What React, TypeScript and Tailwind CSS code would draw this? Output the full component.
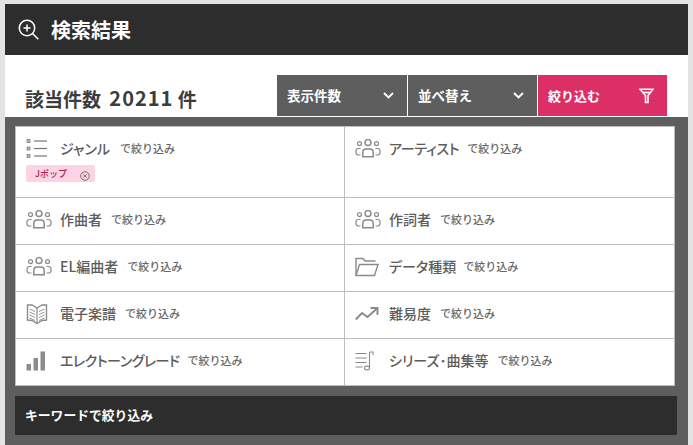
const font = "font-['Noto_Sans_CJK_JP','Noto_Sans',sans-serif]";

function People() {
  return (
    <svg width="26" height="19" viewBox="0 0 26 19" fill="none" stroke="#8a8a8a" strokeWidth="1.2">
      <circle cx="13" cy="3.6" r="3" strokeWidth="1.5" />
      <circle cx="4.5" cy="4.6" r="2" />
      <circle cx="21.5" cy="4.6" r="2" />
      <path d="M7.8 17.8V13.5Q7.8 10 11 10H15Q18.2 10 18.2 13.5V17.8Z" strokeWidth="1.5" />
      <path d="M5.5 9.5H3.5Q1 9.5 1 12V13.5Q1 16 3.5 16H5.5" />
      <path d="M20.5 9.5H22.5Q25 9.5 25 12V13.5Q25 16 22.5 16H20.5" />
    </svg>
  );
}

function ListIcon() {
  return (
    <svg width="22" height="20" viewBox="0 0 22 20" fill="none">
      {[2, 9.5, 17].map((y) => (
        <g key={y}>
          <rect x="1" y={y - 1.5} width="3" height="3" fill="#bbb" stroke="#777" strokeWidth="0.7" />
          <path d={`M8 ${y}H21`} stroke="#777" strokeWidth="1.2" />
        </g>
      ))}
    </svg>
  );
}

function BookIcon() {
  return (
    <svg width="22" height="20" viewBox="0 0 22 20" fill="none" stroke="#8c8c8c" strokeWidth="1.2">
      <path d="M11 4L6 1H1.5V16L6 16.5L11 19.5L16 16.5L20.5 16V1H16Z" strokeWidth="1.4" />
      <path d="M11 4V19.5" />
      <path d="M3.5 5L9 7.5M3.5 8L9 10.5M3.5 11L9 13.5M3.5 14L9 16.5M18.5 5L13 7.5M18.5 8L13 10.5M18.5 11L13 13.5M18.5 14L13 16.5" strokeWidth="0.9" />
    </svg>
  );
}

function BarsIcon() {
  return (
    <svg width="20" height="20" viewBox="0 0 20 20" fill="#8c8c8c">
      <rect x="0.5" y="13" width="4.5" height="6.5" />
      <rect x="7.5" y="7" width="4.5" height="12.5" />
      <rect x="14.5" y="0.5" width="4.5" height="19" />
    </svg>
  );
}

function FolderIcon() {
  return (
    <svg width="24" height="20" viewBox="0 0 24 20" fill="none" stroke="#8a8a8a" strokeWidth="1.4">
      <path d="M1 18.5V1.5H8L10 4H20.5" />
      <path d="M1 18.5H19.5L23 7.5H4.5L1 18.5Z" />
    </svg>
  );
}

function TrendIcon() {
  return (
    <svg width="24" height="14" viewBox="0 0 24 14" fill="none" stroke="#8a8a8a" strokeWidth="1.9">
      <path d="M0.7 12.5L7 6L12.5 10L22 1.5" />
      <path d="M15.5 1H22.5V8" />
    </svg>
  );
}

function MusicListIcon() {
  return (
    <svg width="20" height="20" viewBox="0 0 20 20" fill="none" stroke="#8a8a8a" strokeWidth="1.1">
      <path d="M0.5 2.5H11.5M0.5 7H11.5M0.5 11.5H11.5M0.5 16H7.5" />
      <path d="M14.5 1V16.5" />
      <path d="M14.5 1H18V4" />
      <ellipse cx="12" cy="17" rx="2.6" ry="1.9" />
    </svg>
  );
}

function Cell({ icon, label, suffixGap, labelTracking = "", children }: { icon: React.ReactNode; label: string; suffixGap: string; labelTracking?: string; children?: React.ReactNode }) {
  return (
    <div className="h-full pl-[10px]">
      <div className="flex h-[43px] items-center">
        <span className="flex w-[34px] shrink-0 items-center">{icon}</span>
        <span className={`pb-[2px] text-[14px] leading-none font-medium text-[#5c5c5c] [font-feature-settings:'palt'] ${labelTracking}`}>{label}</span>
        <span className={`${suffixGap} pb-[1px] text-[11px] leading-none font-medium text-[#666]`}>で絞り込み</span>
      </div>
      {children}
    </div>
  );
}

function Chevron() {
  return (
    <svg width="11" height="7" viewBox="0 0 11 7" fill="none" stroke="#fff" strokeWidth="1.9">
      <path d="M1 1L5.5 5.5L10 1" />
    </svg>
  );
}

export default function App() {
  return (
    <div className={`${font} h-[445px] w-[693px] overflow-hidden bg-[#e3e3e3] pt-[4px] pl-[5px]`}>
      <div className="w-[683px]">
        <header className="flex h-[51px] items-center bg-[#2d2d2d] pl-[13px]">
          <svg width="21" height="21" viewBox="0 0 21 21" fill="none" stroke="#fff" strokeWidth="1.5">
            <circle cx="9" cy="9" r="7.7" />
            <path d="M14.5 14.5L20.3 20.3M9 5.5V12.5M5.5 9H12.5" />
          </svg>
          <h1 className="ml-[12px] text-[20px] leading-none font-bold text-white">検索結果</h1>
        </header>
        <div className="flex h-[62px] items-end bg-white pl-[20px]">
          <div className="mb-[8px] flex h-[22px] w-[252px] items-center text-[19px] leading-none font-bold whitespace-pre text-[#3d3d3d]">
            該当件数 <span className="ml-[4px] text-[20px] tracking-[1px]">20211</span> 件
          </div>
          <div className="mb-[1px] flex gap-[1px]">
            <div className="flex h-[41px] w-[130px] items-center justify-between bg-[#5e5e5e] pr-[13px] pl-[10px] text-[13.5px] font-bold text-white">
              表示件数
              <Chevron />
            </div>
            <div className="flex h-[41px] w-[129px] items-center justify-between bg-[#5e5e5e] pr-[13px] pl-[10px] text-[13.5px] font-bold text-white">
              並べ替え
              <Chevron />
            </div>
            <div className="flex h-[41px] w-[129px] items-center justify-between bg-[#dc2f66] pr-[13px] pl-[10px] text-[13px] font-bold text-white">
              絞り込む
              <svg width="15" height="16" viewBox="0 0 15 16" fill="none" stroke="#fff" strokeWidth="1.6">
                <path d="M1 1.2H14L9 7.5V14.5H6.5V7.5Z" />
                <path d="M3.5 4.5H11.5" />
              </svg>
            </div>
          </div>
        </div>
        <div className="h-[328px] bg-[#5e5e5e] pt-[9px] pl-[10px]">
          <div className="grid h-[260px] w-[660px] grid-cols-[329px_1fr] grid-rows-[71px_47px_47px_47px_1fr] border border-[#bdbdbd] bg-white">
            <div className="border-r border-b border-[#bdbdbd]">
              <Cell icon={<ListIcon />} label="ジャンル" suffixGap="ml-[10px]">
                <div className="-mt-[5px] flex h-[17px] w-[69px] items-center rounded-[2px] bg-[#fbd5e3] pl-[9px] text-[9px] leading-none font-medium text-[#b01c56]">
                  Jポップ
                  <svg className="mt-[4px] ml-[13px]" width="10" height="10" viewBox="0 0 11 11" fill="none" stroke="#666" strokeWidth="1">
                    <circle cx="5.5" cy="5.5" r="4.7" />
                    <path d="M3.7 3.7L7.3 7.3M7.3 3.7L3.7 7.3" />
                  </svg>
                </div>
              </Cell>
            </div>
            <div className="border-b border-[#bdbdbd]">
              <Cell icon={<People />} label="アーティスト" labelTracking="tracking-[-0.3px]" suffixGap="ml-[8px]" />
            </div>
            <div className="border-r border-b border-[#bdbdbd]">
              <Cell icon={<People />} label="作曲者" suffixGap="ml-[9px]" />
            </div>
            <div className="border-b border-[#bdbdbd]">
              <Cell icon={<People />} label="作詞者" suffixGap="ml-[9px]" />
            </div>
            <div className="border-r border-b border-[#bdbdbd]">
              <Cell icon={<People />} label="EL編曲者" suffixGap="ml-[9px]" />
            </div>
            <div className="border-b border-[#bdbdbd]">
              <Cell icon={<FolderIcon />} label="データ種類" suffixGap="ml-[7px]" />
            </div>
            <div className="border-r border-b border-[#bdbdbd]">
              <Cell icon={<BookIcon />} label="電子楽譜" suffixGap="ml-[9px]" />
            </div>
            <div className="border-b border-[#bdbdbd]">
              <Cell icon={<TrendIcon />} label="難易度" suffixGap="ml-[9px]" />
            </div>
            <div className="border-r border-[#bdbdbd]">
              <Cell icon={<BarsIcon />} label="エレクトーングレード" labelTracking="tracking-[-0.5px]" suffixGap="ml-[8px]" />
            </div>
            <div>
              <Cell icon={<MusicListIcon />} label="シリーズ･曲集等" suffixGap="ml-[9px]" />
            </div>
          </div>
          <div className="mt-[10px] flex h-[39px] w-[662px] items-center bg-[#2d2d2d] pb-[2px] pl-[10px] text-[12.8px] font-bold text-white">
            キーワードで絞り込み
          </div>
        </div>
      </div>
    </div>
  );
}
